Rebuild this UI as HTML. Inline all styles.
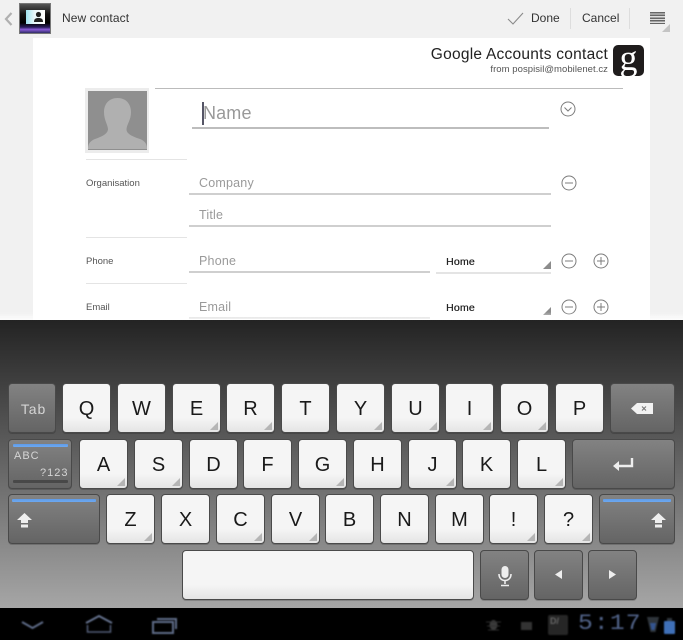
<!DOCTYPE html>
<html><head><meta charset="utf-8"><style>
*{box-sizing:border-box}
html,body{margin:0;padding:0;width:683px;height:640px;overflow:hidden;background:#f1f1f1;font-family:"Liberation Sans",sans-serif}
.a{position:absolute;white-space:nowrap}
#app{position:absolute;left:0;top:0;width:683px;height:320px;overflow:hidden;filter:blur(.35px)}
#sheet{position:absolute;left:33px;top:38px;width:617px;height:282px;background:#fff}
.t{color:#333}
.ph{color:#9a9a9a;font-size:12.5px;letter-spacing:.2px}
.lb{color:#555;font-size:9.5px;letter-spacing:0}
.ln{position:absolute;background:#cfcfcf;height:2px}
.dv{position:absolute;background:#e4e4e4;height:1px;left:86px;width:101px}
.sel{font-size:10.5px;color:#222;letter-spacing:.2px;font-weight:400;text-shadow:.3px 0 0 #444}
.tri{position:absolute;width:0;height:0;border-left:8px solid transparent;border-bottom:8px solid #8c8c8c}
#kb{position:absolute;left:0;top:320px;width:683px;height:288px;background:linear-gradient(#232323,#a6a6a6)}
.k{position:absolute;height:50px;border-radius:4px;border:1.5px solid #4a4a4a;background:linear-gradient(#f5f5f5 0,#f5f5f5 70%,#e4e4e4 100%);color:#1a1a1a;text-align:center;font-size:20px;line-height:50px;width:49px;box-shadow:0 1px 0 rgba(0,0,0,.18)}
.d{background:linear-gradient(#828282,#646464);color:#ddd;border-color:#494949}
.c::after{content:"";position:absolute;right:2px;bottom:2px;width:0;height:0;border-left:8px solid transparent;border-bottom:8px solid #b5b5b5}
.bl{position:absolute;height:3px;background:linear-gradient(#5f9be8,#6ea9ef);border-radius:1px}
#nav{position:absolute;left:0;top:608px;width:683px;height:32px;background:#000}
svg{position:absolute;overflow:visible}
</style></head><body>
<div id="app">
<div id="sheet"></div>
<svg style="left:3px;top:12px" width="10" height="14"><path d="M8.5 1L3 7L8.5 13" fill="none" stroke="#b0b0b0" stroke-width="2.2"/></svg>
<div class="a" style="left:19px;top:3px;width:32px;height:31px;background:linear-gradient(#555 0,#111 35%,#000 65%,#2a1d5c 80%,#8a5ad8 88%,#2f2c66 100%);border:1px solid #777"></div>
<div class="a" style="left:26px;top:10px;width:19px;height:14px;background:linear-gradient(90deg,#9fe3ee,#eaf7fa 45%,#fff)"></div>
<svg style="left:33px;top:11px" width="11" height="12"><circle cx="5.5" cy="3.5" r="2.6" fill="#222"/><path d="M1 11C1 7.5 3 7 5.5 7S10 7.5 10 11Z" fill="#222"/></svg>
<div class="a t" style="left:62px;top:11px;font-size:12px;letter-spacing:.1px">New contact</div>
<svg style="left:507px;top:12px" width="17" height="13"><path d="M1 7L6 12L16 1" fill="none" stroke="#8a8a8a" stroke-width="1.1"/></svg>
<div class="a t" style="left:531px;top:11px;font-size:12px;letter-spacing:0">Done</div>
<div class="a" style="left:570px;top:8px;width:1px;height:21px;background:#ddd"></div>
<div class="a t" style="left:582px;top:11px;font-size:12px;letter-spacing:0">Cancel</div>
<div class="a" style="left:629px;top:8px;width:1px;height:21px;background:#ddd"></div>
<div class="a" style="left:650px;top:12px;width:15px;height:12px;background:repeating-linear-gradient(#666 0,#666 1.4px,#ddd 1.4px,#ddd 2.7px)"></div>
<div class="tri" style="left:662px;top:24px;border-bottom-color:#c4c4c4"></div>
<div class="a" style="right:75px;top:46px;font-size:15.5px;color:#222;letter-spacing:.25px">Google Accounts contact</div>
<div class="a" style="right:75px;top:64px;font-size:9.5px;color:#555;letter-spacing:.05px">from pospisil@mobilenet.cz</div>
<div class="a" style="left:613px;top:45px;width:31px;height:31px;border-radius:5px;background:#1f1c1c;color:#fff;font:400 36px/27px 'Liberation Serif',serif;text-align:center">g</div>
<div class="a" style="left:85px;top:88px;width:64px;height:65px;background:#eee;border:3px solid #ececec"></div>
<div class="a" style="left:88px;top:91px;width:59px;height:59px;background:#8f8f8f;overflow:hidden">
<svg style="left:0;top:0" width="59" height="59"><path d="M29.5 7C21 7 16 13 16 21C16 29 19.5 33 20 38C20 43 13 46 7 48C2 50 0 53 0 58H59C59 53 57 50 52 48C46 46 38 43 38.5 38C39 33 43 29 43 21C43 13 38 7 29.5 7Z" fill="#b0b0b0"/></svg></div>
<div class="a" style="left:155px;top:88px;width:468px;height:1px;background:#bbb"></div>
<div class="dv" style="top:159px"></div>
<div class="a" style="left:202px;top:102px;width:1.5px;height:23px;background:#556"></div>
<div class="a" style="left:203px;top:103px;font-size:18px;color:#999;letter-spacing:.15px">Name</div>
<div class="ln" style="left:192px;top:127px;width:357px;background:#bdbdbd"></div>
<svg style="left:560px;top:101px" width="16" height="16"><circle cx="8" cy="8" r="7" fill="none" stroke="#7c7c7c"/><path d="M4.5 6.5L8 10L11.5 6.5" fill="none" stroke="#7c7c7c"/></svg>
<div class="a lb" style="left:86px;top:178px">Organisation</div>
<div class="a ph" style="left:199px;top:176px">Company</div>
<div class="ln" style="left:189px;top:193px;width:362px"></div>
<svg style="left:561px;top:175px" width="16" height="16"><circle cx="8" cy="8" r="7" fill="none" stroke="#7c7c7c"/><path d="M4 8H12" stroke="#7c7c7c"/></svg>
<div class="a ph" style="left:199px;top:208px">Title</div>
<div class="ln" style="left:189px;top:225px;width:362px"></div>
<div class="dv" style="top:237px"></div>
<div class="a lb" style="left:86px;top:256px">Phone</div>
<div class="a ph" style="left:199px;top:254px">Phone</div>
<div class="ln" style="left:189px;top:271px;width:241px"></div>
<div class="a sel" style="left:446px;top:256px">Home</div>
<div class="ln" style="left:436px;top:272px;width:115px;background:#e4e4e4"></div>
<div class="tri" style="left:543px;top:261px"></div>
<svg style="left:561px;top:253px" width="16" height="16"><circle cx="8" cy="8" r="7" fill="none" stroke="#7c7c7c"/><path d="M4 8H12" stroke="#7c7c7c"/></svg>
<svg style="left:593px;top:253px" width="16" height="16"><circle cx="8" cy="8" r="7" fill="none" stroke="#7c7c7c"/><path d="M4 8H12M8 4V12" stroke="#7c7c7c"/></svg>
<div class="dv" style="top:283px"></div>
<div class="a lb" style="left:86px;top:302px">Email</div>
<div class="a ph" style="left:199px;top:300px">Email</div>
<div class="ln" style="left:189px;top:317px;width:241px"></div>
<div class="a sel" style="left:446px;top:302px">Home</div>
<div class="tri" style="left:543px;top:307px"></div>
<svg style="left:561px;top:299px" width="16" height="16"><circle cx="8" cy="8" r="7" fill="none" stroke="#7c7c7c"/><path d="M4 8H12" stroke="#7c7c7c"/></svg>
<svg style="left:593px;top:299px" width="16" height="16"><circle cx="8" cy="8" r="7" fill="none" stroke="#7c7c7c"/><path d="M4 8H12M8 4V12" stroke="#7c7c7c"/></svg>
<div class="a" style="left:0;top:312px;width:683px;height:8px;background:linear-gradient(rgba(255,255,255,0),rgba(255,255,255,.8))"></div>
</div>

<div id="kb"></div>
<div id="keys" style="position:absolute;left:0;top:0;filter:blur(.3px)">
<div class="k d" style="left:8px;top:383px;width:48px;font-size:14px;letter-spacing:.9px;color:#d5d5d5;line-height:50px;padding-left:3px">Tab</div>
<div class="k" style="left:62px;top:383px">Q</div>
<div class="k" style="left:117px;top:383px">W</div>
<div class="k c" style="left:172px;top:383px">E</div>
<div class="k c" style="left:226px;top:383px">R</div>
<div class="k" style="left:281px;top:383px">T</div>
<div class="k c" style="left:336px;top:383px">Y</div>
<div class="k c" style="left:391px;top:383px">U</div>
<div class="k c" style="left:445px;top:383px">I</div>
<div class="k c" style="left:500px;top:383px">O</div>
<div class="k" style="left:555px;top:383px">P</div>
<div class="k d" style="left:610px;top:383px;width:65px"></div>
<svg style="left:631px;top:403px" width="23" height="11"><path d="M0 5.5L6 0H22V11H6Z" fill="#f2f2f2"/><path d="M11 3.5L15 7.5M15 3.5L11 7.5" stroke="#777" stroke-width="1.1"/></svg>

<div class="k d" style="left:8px;top:439px;width:64px"></div>
<div class="bl" style="left:13px;top:444px;width:55px"></div>
<div class="bl" style="left:13px;top:480px;width:55px;background:#484848"></div>
<div class="a" style="left:14px;top:450px;font-size:11px;color:#d5d5d5;letter-spacing:1px">ABC</div>
<div class="a" style="left:40px;top:467px;font-size:11px;color:#d5d5d5;letter-spacing:1px">?123</div>
<div class="k c" style="left:79px;top:439px">A</div>
<div class="k c" style="left:134px;top:439px">S</div>
<div class="k" style="left:189px;top:439px">D</div>
<div class="k" style="left:243px;top:439px">F</div>
<div class="k c" style="left:298px;top:439px">G</div>
<div class="k" style="left:353px;top:439px">H</div>
<div class="k c" style="left:408px;top:439px">J</div>
<div class="k" style="left:462px;top:439px">K</div>
<div class="k c" style="left:517px;top:439px">L</div>
<div class="k d" style="left:572px;top:439px;width:103px"></div>
<svg style="left:613px;top:457px" width="21" height="14"><path d="M19 1V9H4" fill="none" stroke="#eee" stroke-width="2.4"/><path d="M0 9L6 4V14Z" fill="#eee"/></svg>

<div class="k d" style="left:8px;top:494px;width:92px"></div>
<div class="bl" style="left:12px;top:499px;width:84px"></div>
<svg style="left:17px;top:513px" width="15" height="16"><path d="M7.5 0L15 7H11V10H4V7H0Z" fill="#eee"/><rect x="4" y="11.5" width="7" height="3" fill="#eee"/></svg>
<div class="k c" style="left:106px;top:494px">Z</div>
<div class="k" style="left:161px;top:494px">X</div>
<div class="k c" style="left:216px;top:494px">C</div>
<div class="k c" style="left:271px;top:494px">V</div>
<div class="k" style="left:325px;top:494px">B</div>
<div class="k" style="left:380px;top:494px">N</div>
<div class="k" style="left:435px;top:494px">M</div>
<div class="k c" style="left:489px;top:494px">!</div>
<div class="k c" style="left:544px;top:494px">?</div>
<div class="k d" style="left:599px;top:494px;width:76px"></div>
<div class="bl" style="left:603px;top:499px;width:68px"></div>
<svg style="left:651px;top:513px" width="15" height="16"><path d="M7.5 0L15 7H11V10H4V7H0Z" fill="#eee"/><rect x="4" y="11.5" width="7" height="3" fill="#eee"/></svg>

<div class="k" style="left:182px;top:550px;width:292px"></div>
<div class="k d" style="left:480px;top:550px;width:49px"></div>
<svg style="left:498px;top:566px" width="14" height="21"><rect x="3.5" y="0" width="7" height="12" rx="3.5" fill="#eee"/><path d="M1 8C1 12 3.5 14.5 7 14.5S13 12 13 8M7 14.5V18M3 19.5H11" fill="none" stroke="#eee" stroke-width="1.6"/></svg>
<div class="k d" style="left:534px;top:550px;width:49px"></div>
<svg style="left:555px;top:570px" width="7" height="9"><path d="M7 0V9L0 4.5Z" fill="#eee"/></svg>
<div class="k d" style="left:588px;top:550px;width:49px"></div>
<svg style="left:609px;top:570px" width="7" height="9"><path d="M0 0V9L7 4.5Z" fill="#eee"/></svg>
</div>

<div id="nav"></div>
<div style="position:absolute;left:0;top:0;filter:blur(.7px)">
<svg style="left:21px;top:621px" width="23" height="10"><path d="M1 1L11.5 7L22 1" fill="none" stroke="#5f6c88" stroke-width="2"/></svg>
<svg style="left:85px;top:615px" width="28" height="18"><path d="M1 8L14 1L27 8" fill="none" stroke="#66738f" stroke-width="2"/><path d="M2.5 10V17H25.5V10" fill="none" stroke="#525d76" stroke-width="1.5"/></svg>
<svg style="left:152px;top:617px" width="26" height="17"><rect x="1" y="5" width="20" height="11" fill="none" stroke="#5f6c88" stroke-width="2"/><path d="M5 2H24V12" fill="none" stroke="#5f6c88" stroke-width="2"/></svg>
<svg style="left:486px;top:618px" width="15" height="14"><ellipse cx="7.5" cy="7" rx="4" ry="5" fill="#3a3a3a"/><path d="M0 4H15M1 8H14M2 12H13" stroke="#303030"/></svg>
<div class="a" style="left:521px;top:622px;width:11px;height:8px;background:#333"></div>
<div class="a" style="left:548px;top:615px;width:20px;height:20px;background:#262626;border-radius:2px;color:#666;font:700 9px/13px 'Liberation Sans',sans-serif;padding-left:2px">D/</div>
<div class="a" style="left:578px;top:611px;font:400 22px/26px 'Liberation Mono',monospace;color:#52648a;letter-spacing:1px;transform:scaleX(1.12);transform-origin:left">5:17</div>
<svg style="left:647px;top:616px" width="12" height="17"><path d="M0 1H12L8.5 16H3.5Z" fill="#2e343a"/><path d="M3 7H9L7.5 14H4.5Z" fill="#34548f"/></svg>
<div class="a" style="left:664px;top:621px;width:11px;height:13px;background:#3f70b8;border-radius:1px"></div>
<div class="a" style="left:667px;top:618px;width:5px;height:3px;background:#2e343a"></div>
</div>
</body></html>
